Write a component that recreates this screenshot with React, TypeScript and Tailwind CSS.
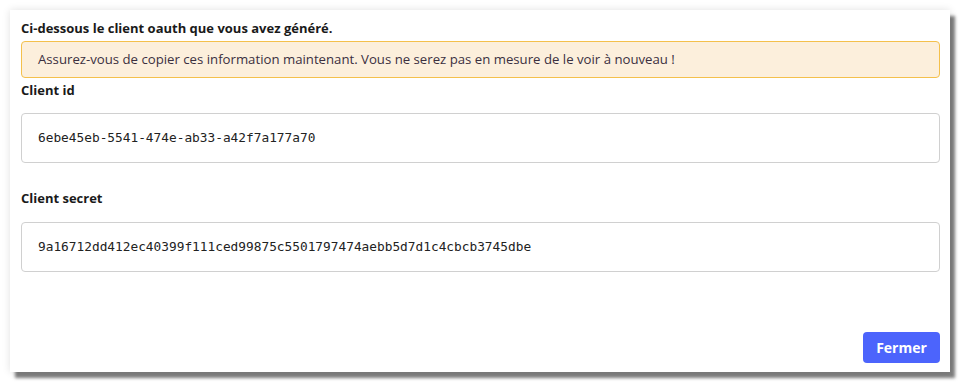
export default function App() {
  const clientId = "6ebe45eb-5541-474e-ab33-a42f7a177a70";
  const clientSecret =
    "9a16712dd412ec40399f111ced99875c5501797474aebb5d7d1c4cbcb3745dbe";

  return (
    <div className="w-[960px] h-[384px] bg-white pt-[10px] pl-[10px] font-['Open_Sans',sans-serif]">
      <div className="w-[940px] h-[362px] bg-white pl-[11px] pr-[10px] pt-[8px] pb-[9px] flex flex-col shadow-[0_0_8px_rgba(0,0,0,0.12),5px_6px_3px_rgba(0,0,0,0.5)]">
        <h1 className="text-[13px] leading-[20px] font-bold text-[#1a1a1a]">
          Ci-dessous le client oauth que vous avez généré.
        </h1>

        {/* Warning */}
        <div className="mt-[3px] h-[37px] flex items-center px-[16px] bg-[#fcefdc] border border-[#f4c04c] rounded-[4px] text-[13.2px] text-[#3b2f3f]">
          Assurez-vous de copier ces information maintenant. Vous ne serez pas
          en mesure de le voir à nouveau !
        </div>

        <label className="mt-[2px] text-[13px] leading-[20px] font-bold text-[#1a1a1a]">
          Client id
        </label>
        <div className="mt-[13px] h-[50px] flex items-center px-[16px] border border-[#d0d0d0] rounded-[4px] font-['DejaVu_Sans_Mono',monospace] text-[12.8px] text-[#222]">
          {clientId}
        </div>

        <label className="mt-[25px] text-[13px] leading-[20px] font-bold text-[#1a1a1a]">
          Client secret
        </label>
        <div className="mt-[14px] h-[50px] flex items-center px-[16px] border border-[#d0d0d0] rounded-[4px] font-['DejaVu_Sans_Mono',monospace] text-[12.8px] text-[#222]">
          {clientSecret}
        </div>

        <div className="mt-auto flex justify-end">
          <button className="w-[77px] h-[31px] bg-[#4c64fc] text-white text-[14px] font-bold rounded-[4px]">
            Fermer
          </button>
        </div>
      </div>
    </div>
  );
}
